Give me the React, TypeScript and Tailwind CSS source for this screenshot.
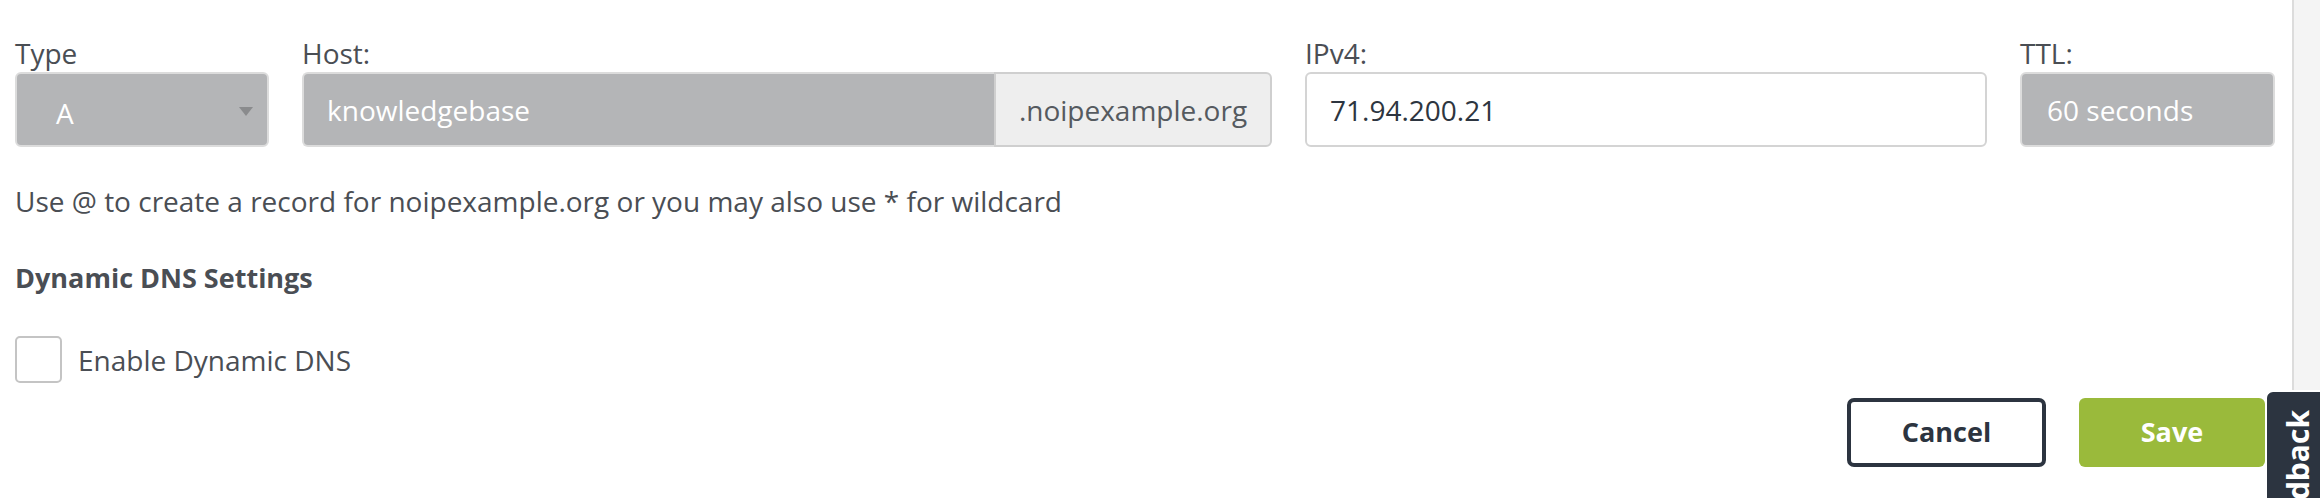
import React from "react";

const Label = ({ children }: { children: React.ReactNode }) => (
  <label className="block text-[28px] leading-[34px] text-[#4a4e54] mb-[2px]">{children}</label>
);

const App = () => {
  return (
    <div className="relative w-[2320px] h-[498px] overflow-hidden bg-[#f4f4f4] font-['Open_Sans',sans-serif]">
      <div className="w-[2294px] h-[560px] -mt-[20px] bg-white border-r-2 border-t-2 border-[#dcdcdc] rounded-tr-[14px] pt-[54px] pl-[15px]">
        {/* record fields */}
        <div className="grid grid-cols-[254px_970px_682px_255px] gap-x-[33px]">
          <div>
            <Label>Type</Label>
            <div className="relative h-[75px] rounded-[6px] border-2 border-[#dcdcdc] bg-[#b4b5b7] flex items-center pl-[39px] pt-[6px] text-[28px] text-white">
              A
              <svg className="absolute right-[14px] top-[33px]" width="14" height="9" viewBox="0 0 14 9">
                <path d="M0 0h14L7 9z" fill="#8a8b8d" />
              </svg>
            </div>
          </div>
          <div>
            <Label>Host:</Label>
            <div className="flex h-[75px]">
              <div className="flex-1 flex items-center pl-[23px] rounded-l-[6px] border-2 border-r-0 border-[#dcdcdc] bg-[#b4b5b7] text-[28px] text-white">
                knowledgebase
              </div>
              <div className="w-[278px] flex items-center justify-center rounded-r-[6px] border-2 border-[#cfcfcf] bg-[#eeeeee] text-[28px] text-[#555a5f]">
                .noipexample.org
              </div>
            </div>
          </div>
          <div>
            <Label>IPv4:</Label>
            <div className="h-[75px] flex items-center pl-[23px] rounded-[6px] border-2 border-[#d4d4d4] bg-white text-[28px] text-[#2d3540]">
              71.94.200.21
            </div>
          </div>
          <div>
            <Label>TTL:</Label>
            <div className="h-[75px] flex items-center pl-[25px] rounded-[6px] border-2 border-[#dcdcdc] bg-[#b4b5b7] text-[28px] text-white">
              60 seconds
            </div>
          </div>
        </div>

        <p className="mt-[37px] text-[28px] leading-[34px] text-[#4a4e54]">
          Use @ to create a record for noipexample.org or you may also use * for wildcard
        </p>

        <h4 className="mt-[43px] text-[27px] leading-[34px] font-bold text-[#4a4e54]">Dynamic DNS Settings</h4>

        <label className="mt-[41px] flex items-center gap-[16px] text-[28px] text-[#4a4e54]">
          <span className="w-[47px] h-[47px] rounded-[5px] border-2 border-[#c4c4c4] bg-white" />
          Enable Dynamic DNS
        </label>

        <div className="flex justify-end gap-[33px] mt-[15px] pr-[27px]">
          <button className="w-[199px] h-[69px] rounded-[7px] border-[4px] border-[#2c3440] bg-white text-[27px] font-bold text-[#2c3440]">
            Cancel
          </button>
          <button className="w-[186px] h-[69px] rounded-[6px] bg-[#9aba3b] text-[27px] font-bold text-white">
            Save
          </button>
        </div>
      </div>

      {/* feedback tab */}
      <div className="absolute left-[2265px] top-[390px] w-[64px] h-[200px] rounded-tl-[8px] bg-[#2c3440] flex items-start justify-center border-l-2 border-t-2 border-white">
        <span className="mt-[18px] block text-[30px] font-bold text-white [writing-mode:vertical-rl] rotate-180 leading-none">
          Feedback
        </span>
      </div>
    </div>
  );
};

export default App;
